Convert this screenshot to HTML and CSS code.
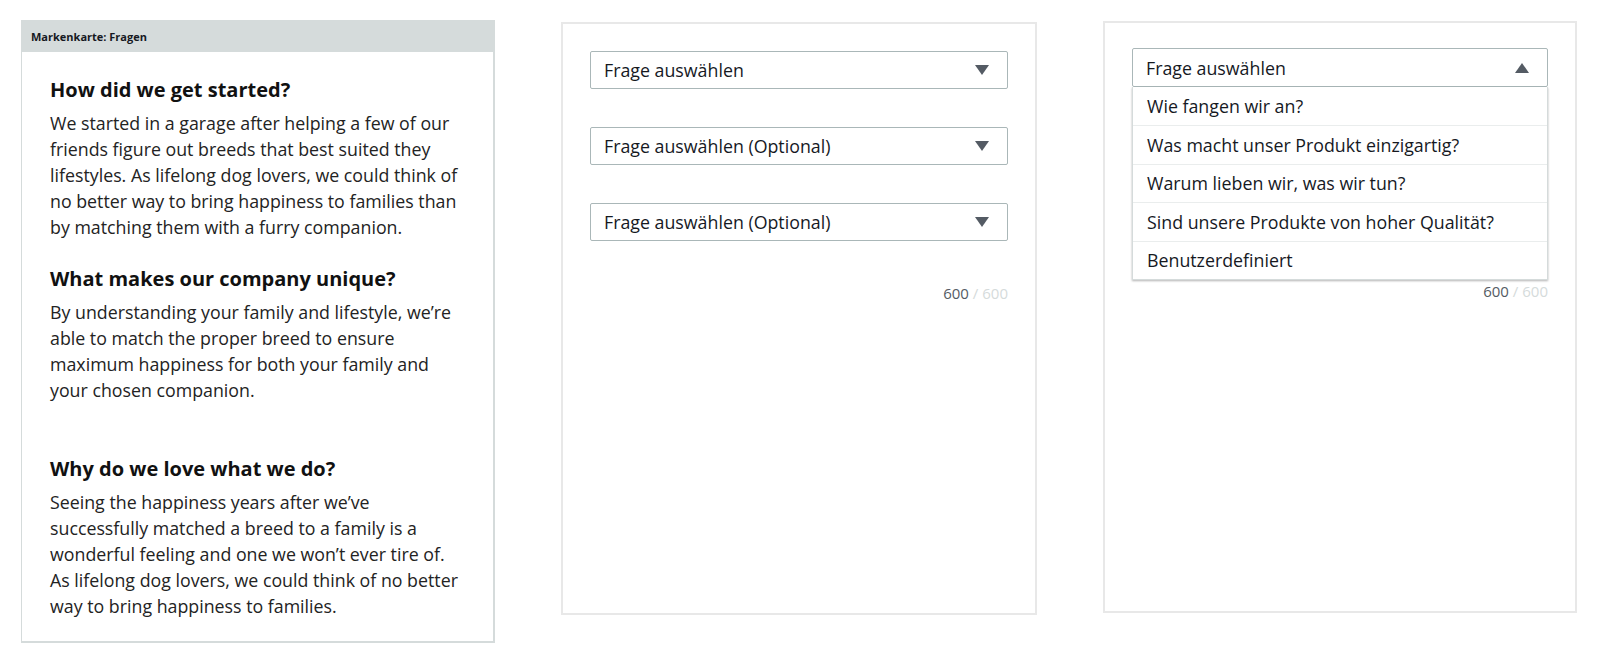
FILE: index.html
```html
<!DOCTYPE html>
<html lang="de">
<head>
<meta charset="utf-8">
<title>Markenkarte: Fragen</title>
<link rel="stylesheet" href="styles.css">
</head>
<body>
<div class="page">
  <section class="card preview">
    <header class="card-head">Markenkarte: Fragen</header>
    <div class="card-body">
      <h3 class="q">How did we get started?</h3>
      <p class="a">We started in a garage after helping a few of our friends figure out breeds that best suited they lifestyles. As lifelong dog lovers, we could think of no better way to bring happiness to families than by matching them with a furry companion.</p>
      <h3 class="q">What makes our company unique?</h3>
      <p class="a a-before-gap">By understanding your family and lifestyle, we’re able to match the proper breed to ensure maximum happiness for both your family and your chosen companion.</p>
      <h3 class="q">Why do we love what we do?</h3>
      <p class="a">Seeing the happiness years after we’ve successfully matched a breed to a family is a wonderful feeling and one we won’t ever tire of. As lifelong dog lovers, we could think of no better way to bring happiness to families.</p>
    </div>
  </section>

  <section class="card editor editor-closed">
    <div class="select"><span>Frage auswählen</span><svg class="caret" viewBox="0 0 14 10" width="14" height="10"><path d="M0 0H14L7 10Z"/></svg></div>
    <div class="select"><span>Frage auswählen (Optional)</span><svg class="caret" viewBox="0 0 14 10" width="14" height="10"><path d="M0 0H14L7 10Z"/></svg></div>
    <div class="select"><span>Frage auswählen (Optional)</span><svg class="caret" viewBox="0 0 14 10" width="14" height="10"><path d="M0 0H14L7 10Z"/></svg></div>
    <div class="counter"><span class="used">600</span> <span class="max">/ 600</span></div>
  </section>

  <section class="card editor editor-open">
    <div class="select-wrap">
      <div class="select"><span>Frage auswählen</span><svg class="caret" viewBox="0 0 14 10" width="14" height="10"><path d="M0 10H14L7 0Z"/></svg></div>
      <ul class="menu">
        <li>Wie fangen wir an?</li>
        <li>Was macht unser Produkt einzigartig?</li>
        <li>Warum lieben wir, was wir tun?</li>
        <li>Sind unsere Produkte von hoher Qualität?</li>
        <li>Benutzerdefiniert</li>
      </ul>
    </div>
    <div class="select covered"><span>Frage auswählen (Optional)</span><svg class="caret" viewBox="0 0 14 10" width="14" height="10"><path d="M0 0H14L7 10Z"/></svg></div>
    <div class="select covered"><span>Frage auswählen (Optional)</span><svg class="caret" viewBox="0 0 14 10" width="14" height="10"><path d="M0 0H14L7 10Z"/></svg></div>
    <div class="counter"><span class="used">600</span> <span class="max">/ 600</span></div>
  </section>
</div>
</body>
</html>
```
FILE: styles.css
```css
* { box-sizing: border-box; }
html, body { margin: 0; padding: 0; background: #fff; }
body {
  font-family: "Open Sans", "Noto Sans", "Liberation Sans", sans-serif;
  color: #16191f;
}
.page {
  display: flex;
  align-items: flex-start;
  gap: 66px;
  padding: 20px 0 0 21px;
}
.card {
  background: #fff;
}
.preview {
  width: 474px;
  height: 623px;
  border: 1px solid #d5dbdb;
  border-width: 0 2px 2px 1px;
}
.card-head {
  background: #d5dbdb;
  height: 32px;
  padding: 0 9px;
  font-size: 11px;
  font-weight: 700;
  line-height: 33px;
  color: #16191f;
}
.card-body {
  padding: 25px 30px 0 28px;
}
.q {
  margin: 0;
  font-size: 20px;
  line-height: 26px;
  font-weight: 700;
  color: #111;
}
.a {
  margin: 7px 0 26px;
  font-size: 17.8px;
  line-height: 26px;
  color: #232323;
}
.a-before-gap { margin-bottom: 53px; }

.editor {
  border: 2px solid #e8e8e8;
  padding: 27px 27px 0;
}
.editor-closed {
  width: 476px;
  height: 593px;
  margin-top: 2px;
}
.editor-open {
  width: 474px;
  height: 592px;
  margin-top: 1px;
  padding-top: 25px;
}
.select {
  height: 38px;
  border: 1px solid #aab7b8;
  border-radius: 2px;
  display: flex;
  align-items: center;
  justify-content: space-between;
  padding: 0 18px 0 13px;
  font-size: 17.8px;
  color: #16191f;
  margin-bottom: 38px;
  background: #fff;
}
.select .caret { fill: #545b64; flex: none; }
.select.covered { visibility: hidden; }
.select-wrap { position: relative; margin-bottom: 38px; }
.select-wrap .select { margin-bottom: 0; height: 39px; }
.menu {
  position: absolute;
  left: 0;
  right: 0;
  top: 39px;
  margin: 0;
  padding: 0;
  list-style: none;
  background: #fff;
  border: 1px solid #d5dbdb;
  border-top: 0;
  box-shadow: 0 1px 2px rgba(0, 0, 0, 0.3);
  z-index: 2;
}
.menu li {
  height: 38.4px;
  display: flex;
  align-items: center;
  padding: 0 14px;
  font-size: 17.8px;
  color: #16191f;
  border-top: 1px solid #eaeded;
}
.menu li:first-child { border-top: 0; }
.counter {
  text-align: right;
  font-size: 15px;
  line-height: 16px;
  margin-top: 44px;
}
.counter .used { color: #545b64; }
.counter .max { color: #d5dbdb; }
```
